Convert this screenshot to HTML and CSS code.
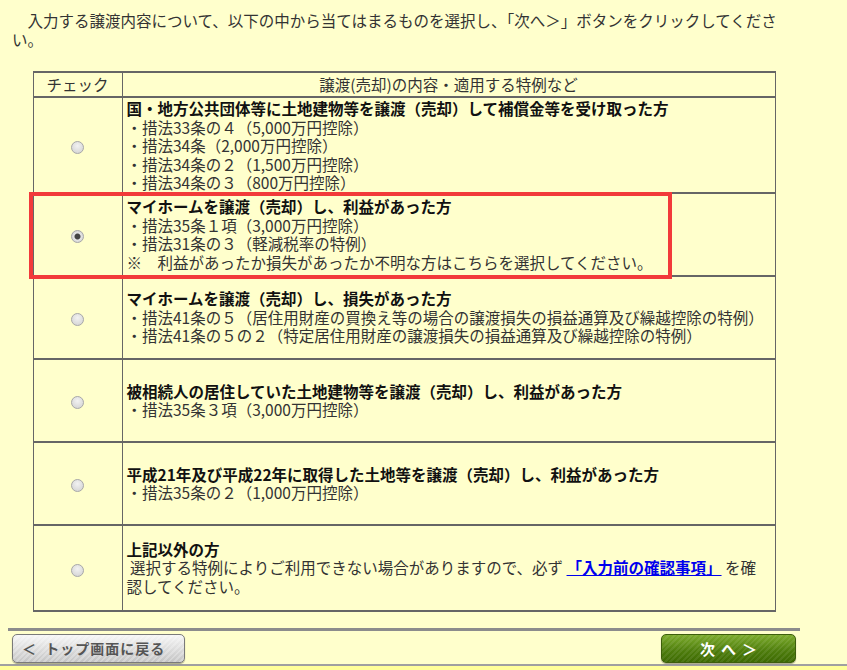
FILE: index.html
```html
<!DOCTYPE html>
<html lang="ja">
<head>
    <meta charset="UTF-8">
    <meta name="viewport" content="width=device-width, initial-scale=1.0">
    <title>譲渡内容の選択</title>
    <link rel="stylesheet" href="styles.css">
</head>
<body>
    <div class="page">
        <p class="intro">　入力する譲渡内容について、以下の中から当てはまるものを選択し、「次へ＞」ボタンをクリックしてください。</p>

        <div class="table-wrap">
            <table class="choice-table">
                <thead>
                    <tr>
                        <th class="col-check">チェック</th>
                        <th>譲渡(売却)の内容・適用する特例など</th>
                    </tr>
                </thead>
                <tbody>
                    <tr class="first-row">
                        <td class="col-check"><input type="radio" name="kind" value="1"></td>
                        <td>
                            <div class="title">国・地方公共団体等に土地建物等を譲渡（売却）して補償金等を受け取った方</div>
                            <div>・措法33条の４（5,000万円控除）</div>
                            <div>・措法34条（2,000万円控除）</div>
                            <div>・措法34条の２（1,500万円控除）</div>
                            <div>・措法34条の３（800万円控除）</div>
                        </td>
                    </tr>
                    <tr>
                        <td class="col-check"><input type="radio" name="kind" value="2" checked></td>
                        <td>
                            <div class="title">マイホームを譲渡（売却）し、利益があった方</div>
                            <div>・措法35条１項（3,000万円控除）</div>
                            <div>・措法31条の３（軽減税率の特例）</div>
                            <div>※　利益があったか損失があったか不明な方はこちらを選択してください。</div>
                        </td>
                    </tr>
                    <tr>
                        <td class="col-check"><input type="radio" name="kind" value="3"></td>
                        <td>
                            <div class="title">マイホームを譲渡（売却）し、損失があった方</div>
                            <div>・措法41条の５（居住用財産の買換え等の場合の譲渡損失の損益通算及び繰越控除の特例）</div>
                            <div>・措法41条の５の２（特定居住用財産の譲渡損失の損益通算及び繰越控除の特例）</div>
                        </td>
                    </tr>
                    <tr>
                        <td class="col-check"><input type="radio" name="kind" value="4"></td>
                        <td>
                            <div class="title">被相続人の居住していた土地建物等を譲渡（売却）し、利益があった方</div>
                            <div>・措法35条３項（3,000万円控除）</div>
                        </td>
                    </tr>
                    <tr>
                        <td class="col-check"><input type="radio" name="kind" value="5"></td>
                        <td>
                            <div class="title">平成21年及び平成22年に取得した土地等を譲渡（売却）し、利益があった方</div>
                            <div>・措法35条の２（1,000万円控除）</div>
                        </td>
                    </tr>
                    <tr class="last-row">
                        <td class="col-check"><input type="radio" name="kind" value="6"></td>
                        <td>
                            <div class="title">上記以外の方</div>
                            <div>&nbsp;選択する特例によりご利用できない場合がありますので、必ず <a href="#" class="check-link">「入力前の確認事項」</a> を確認してください。</div>
                        </td>
                    </tr>
                </tbody>
            </table>
            <div class="highlight"></div>
        </div>

        <div class="button-bar">
            <button class="btn btn-back">＜&nbsp;&nbsp;トップ画面に戻る</button>
            <button class="btn btn-next">次へ＞</button>
        </div>
    </div>
    <div class="footer-strip"></div>
</body>
</html>
```

FILE: styles.css
```css
* {
    box-sizing: border-box;
}

body {
    margin: 0;
    background: #ffffcc;
    font-family: "Noto Sans CJK JP", "Noto Sans", sans-serif;
    color: #333;
    overflow: hidden;
}

.page {
    width: 792px;
    margin-left: 8px;
    padding-top: 11px;
}

.intro {
    margin: 0 4px;
    font-size: 15.5px;
    line-height: 19px;
    color: #333;
}

.table-wrap {
    position: relative;
    width: 743px;
    margin: 22px auto 0;
}

.choice-table {
    width: 100%;
    border-collapse: collapse;
    font-size: 15.5px;
    line-height: 18.5px;
}

.choice-table th,
.choice-table td {
    border: 1px solid #666;
    border-top-width: 2px;
    border-bottom-width: 2px;
}

.choice-table th {
    height: 25px;
    font-weight: normal;
    color: #333;
    padding: 0;
}

.choice-table td {
    height: 83px;
    padding: 0 4px;
    vertical-align: middle;
}

.choice-table .first-row td {
    padding-top: 1px;
}

.choice-table .last-row td {
    height: 86px;
}

.choice-table .col-check {
    width: 89px;
    text-align: center;
    padding: 0;
}

.title {
    font-weight: bold;
    color: #111;
}

.check-link {
    color: #0000ee;
    font-weight: bold;
    text-decoration: underline;
}

input[type="radio"] {
    appearance: none;
    -webkit-appearance: none;
    width: 13px;
    height: 13px;
    margin: 0;
    border: 1px solid #a8a8a8;
    border-radius: 50%;
    background: radial-gradient(circle at 50% 35%, #f2f2f2 0%, #d0d0d0 100%);
    vertical-align: middle;
    position: relative;
}

input[type="radio"]:checked {
    background: radial-gradient(circle, #444 0, #444 2.5px, #e6e6e6 3.5px, #c8c8c8 100%);
}

.highlight {
    position: absolute;
    left: -4px;
    top: 121px;
    width: 643px;
    height: 87px;
    border: 4px solid #f23a3a;
    pointer-events: none;
}

.button-bar {
    margin-top: 16px;
    border-top: 3px solid #8c8c8c;
    padding: 3px 4px 0;
    display: flex;
    justify-content: space-between;
    height: 36px;
}

.btn {
    height: 29px;
    border-radius: 5px;
    font-family: inherit;
    font-weight: bold;
    cursor: pointer;
}

.btn-back {
    width: 173px;
    border: 1px solid #7a7a7a;
    background:
        repeating-linear-gradient(135deg, rgba(255, 255, 255, 0.25) 0 2px, rgba(255, 255, 255, 0) 2px 4px),
        linear-gradient(#f6f6f6, #c4c4c4);
    box-shadow: 0 1px 1px rgba(0, 0, 0, 0.35);
    color: #555;
    font-size: 14px;
    letter-spacing: 1px;
    text-align: left;
    padding: 0 0 0 9px;
}

.btn-next {
    width: 135px;
    border: 1px solid #3d5e0c;
    background:
        repeating-linear-gradient(135deg, rgba(255, 255, 255, 0.08) 0 2px, rgba(255, 255, 255, 0) 2px 4px),
        linear-gradient(#7cab2c, #4d7c0c 60%, #3d6a02);
    box-shadow: 0 1px 1px rgba(0, 0, 0, 0.35);
    color: #fff;
    font-size: 15px;
    letter-spacing: 6px;
    padding: 0 0 0 6px;
}

.footer-strip {
    border-top: 2px solid #a0a0a0;
    background: #ffff99;
    height: 30px;
}
```
